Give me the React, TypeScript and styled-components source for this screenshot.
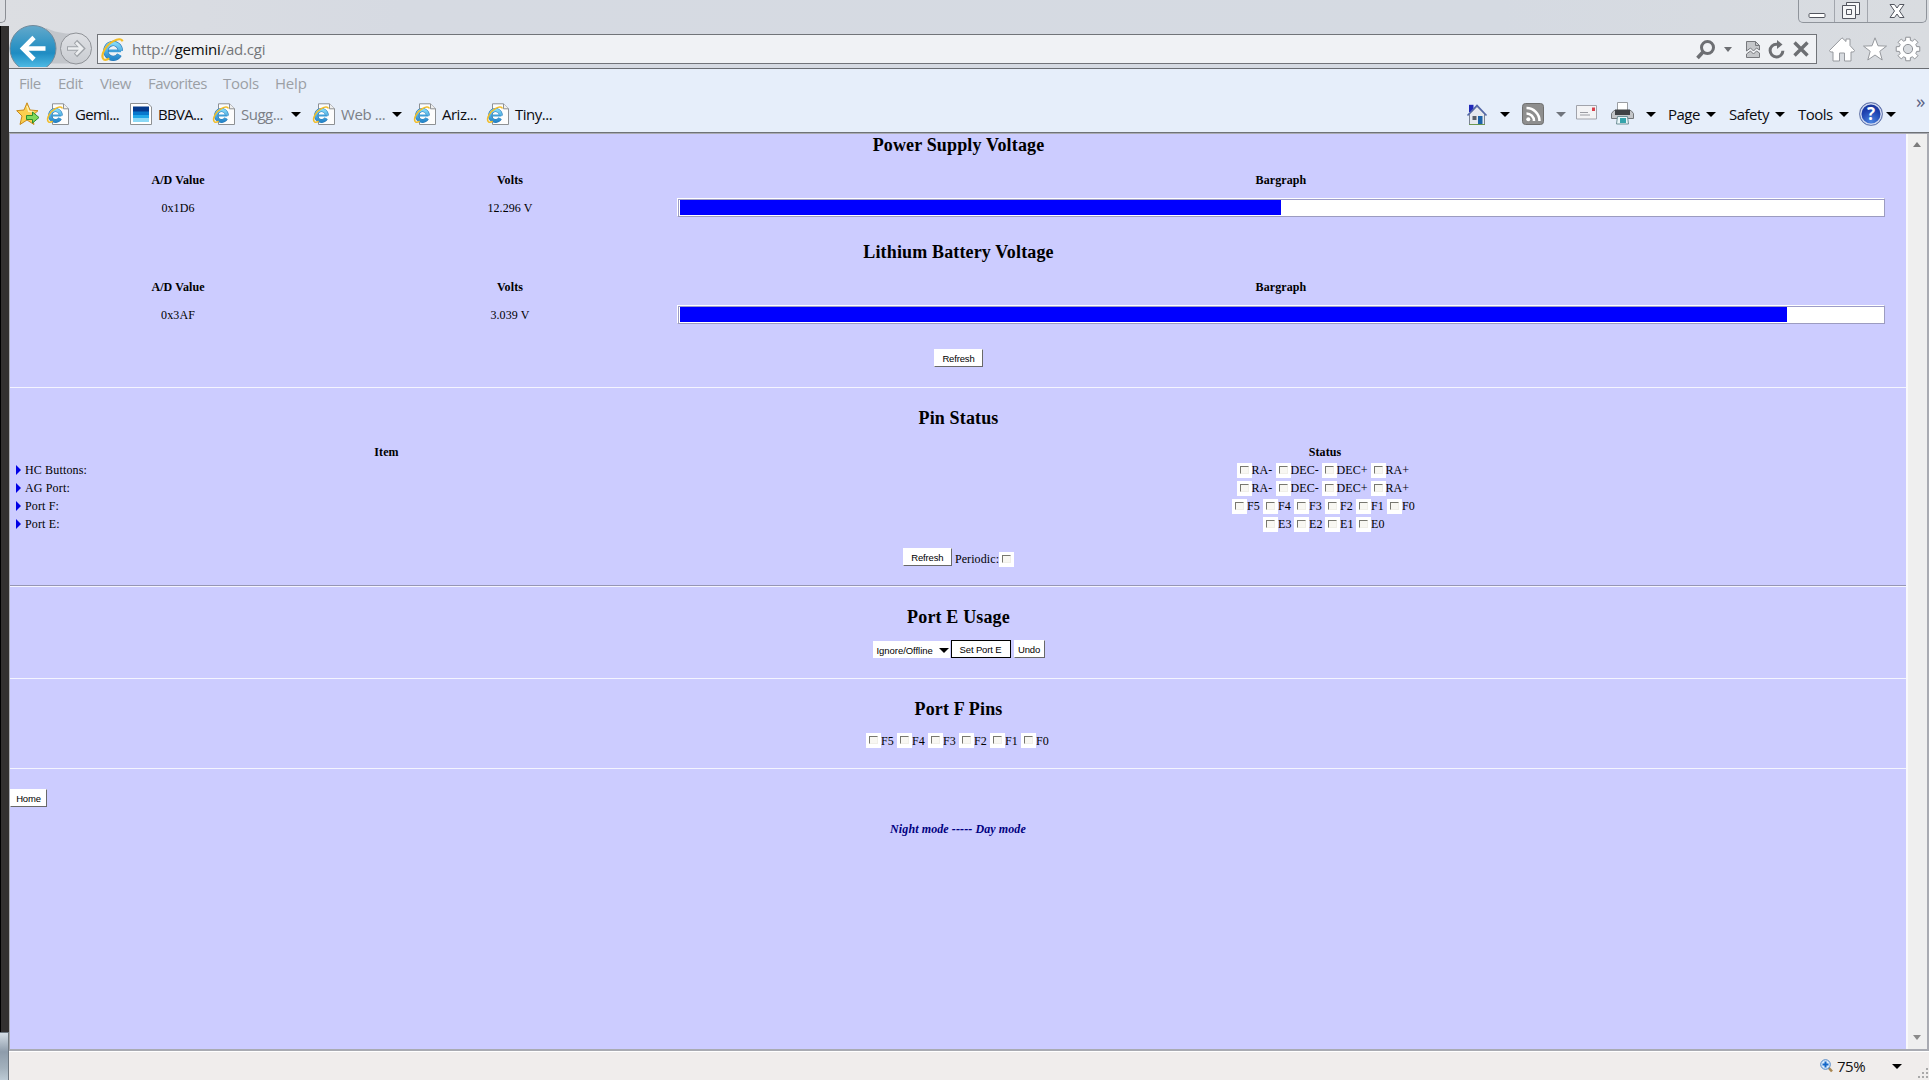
import React, { useId } from "react";
import styled, { createGlobalStyle, css } from "styled-components";

const GlobalStyle = createGlobalStyle`
  *, *::before, *::after { box-sizing: border-box; }
  html, body { margin: 0; padding: 0; overflow: hidden; background: #d9dce2; }
  svg { display: block; flex: none; overflow: visible; }
`;

const ui = '"Open Sans", "Noto Sans", sans-serif';
const serif = '"Liberation Serif", "Times New Roman", serif';
const sans = '"Liberation Sans", Arial, sans-serif';

/* ---------- window frame ---------- */

const Desktop = styled.div`
  width: 1929px;
  height: 1080px;
  display: flex;
  overflow: hidden;
  background: linear-gradient(90deg, #dcdee2 0, #d6dae2 400px, #d5dae2 1500px, #d9dce0 100%);
`;

const LeftEdge = styled.div`
  flex: none;
  width: 9px;
  display: flex;
  flex-direction: column;
`;

const TabStub = styled.div`
  width: 6px;
  height: 23px;
  margin-bottom: 3px;
  border: solid #8b8e94;
  border-width: 0 1px 1px 0;
  border-radius: 0 0 5px 0;
`;

const DarkStrip = styled.div`
  height: 1006px;
  border-left: 1px solid #000;
  background: #333130;
`;

const TaskPiece = styled.div`
  flex: 1;
  border: solid #6e7780;
  border-width: 1px 1px 0 0;
  background: linear-gradient(#d5dee6, #8e9cab 40%, #a3b1bd 75%, #bccad5);
`;

const Window = styled.div`
  flex: 1;
  min-width: 0;
  display: flex;
  flex-direction: column;
`;

const TitleBar = styled.div`
  height: 34px;
  display: flex;
  justify-content: flex-end;
  padding-right: 2px;
`;

const WindowButtons = styled.div`
  height: 23px;
  display: flex;
  border: 1px solid #8f949b;
  border-top: 0;
  border-radius: 0 0 5px 5px;
`;

const WindowButton = styled.div<{ $w: number }>`
  width: ${(p) => p.$w}px;
  display: flex;
  justify-content: center;
  align-items: flex-start;
  & + & { border-left: 1px solid #a2a6ad; }
`;

const AddressRow = styled.div`
  height: 34px;
  display: flex;
  align-items: flex-start;
`;

const NavButtons = styled.div`
  width: 88px;
  height: 34px;
  flex: none;
`;

const AddressBox = styled.div`
  width: 1720px;
  height: 30px;
  flex: none;
  display: flex;
  align-items: center;
  padding-left: 3px;
  border: 1px solid #717479;
  background: #f0f2f5;
  font: 15px/28px ${ui};
  color: #75777a;
`;

const Url = styled.span`
  width: 1564px;
  margin-left: 8px;
  letter-spacing: -0.2px;
  white-space: nowrap;
  b { font-weight: 400; color: #0a0a0a; }
`;

const Slot = styled.span<{ $w: number; $gap?: number; $dim?: boolean; $ls?: number }>`
  flex: none;
  width: ${(p) => p.$w}px;
  margin-left: ${(p) => p.$gap ?? 0}px;
  white-space: nowrap;
  letter-spacing: ${(p) => p.$ls ?? -0.5}px;
  ${(p) => p.$dim && css`color: #7b7f86;`}
`;

const CommandArea = styled.div`
  height: 65px;
  border-top: 1px solid #6a6d72;
  border-bottom: 1px solid #6f7277;
  background: #e6eefa;
  display: flex;
  flex-direction: column;
  font: 15px/20px ${ui};
  color: #0c0c10;
`;

const MenuRow = styled.div`
  height: 27px;
  display: flex;
  align-items: center;
  color: #9b9fa5;
`;

const LinksRow = styled.div`
  height: 36px;
  display: flex;
  align-items: center;
  & > span, & > div > span { padding-bottom: 1px; }
`;

const RightTools = styled.div`
  display: flex;
  align-items: center;
  margin-left: auto;
  padding-right: 3px;
`;

const More = styled.span`
  width: 10px;
  height: 40px;
  margin-left: 20px;
  font: 19px/15px ${ui};
  letter-spacing: -1px;
  color: #5b6384;
`;

const Triangle = styled.i<{ $gap?: number; $color?: string; $w?: number }>`
  flex: none;
  width: 0;
  height: 0;
  margin-left: ${(p) => p.$gap ?? 0}px;
  border: solid transparent;
  border-width: 5px ${(p) => (p.$w ?? 10) / 2}px 0;
  border-top-color: ${(p) => p.$color ?? "#000"};
`;

/* ---------- page ---------- */

const Viewport = styled.div`
  height: 918px;
  display: flex;
  border: solid #a9abb2;
  border-width: 1px 2px 2px 1px;
`;

const Page = styled.main`
  width: 1896px;
  flex: none;
  background: #ccccff;
  display: flex;
  flex-direction: column;
  font: 12px/18px ${serif};
  letter-spacing: 0.1px;
  color: #000;
`;

const ScrollBar = styled.div`
  flex: 1;
  display: flex;
  flex-direction: column;
  align-items: center;
  justify-content: space-between;
  padding: 8px 2px 9px 0;
  background: #efefef;
  border-left: 2px solid #f9f9fb;
`;

const Arrow = styled.i<{ $up?: boolean }>`
  border: solid transparent;
  ${(p) => p.$up
    ? css`border-width: 0 4.5px 5px; border-bottom-color: #7c7c7c;`
    : css`border-width: 5px 4.5px 0; border-top-color: #8a8a8a;`}
`;

const Heading = styled.h2<{ $top: number }>`
  margin: ${(p) => p.$top}px 0 0;
  padding-left: 1px;
  height: 22px;
  font: bold 18px/22px ${serif};
  letter-spacing: 0.15px;
  text-align: center;
`;

const VoltageGrid = styled.div`
  display: grid;
  grid-template-columns: 334px 330px 1212px;
  grid-template-rows: 18px 20px;
  row-gap: 8px;
  margin: 15px 0 0 1px;
  text-align: center;
  align-items: center;
`;

const Th = styled.div`
  font-weight: bold;
`;

const Reading = styled.div`
  padding-top: 1px;
`;

const Bar = styled.div`
  width: 1208px;
  height: 19px;
  margin-left: 2px;
  padding: 1px 2px;
  border: solid;
  border-width: 1px;
  border-color: #fff #9c9cc0 #9c9cc0 #fff;
  background: #fff;
  display: flex;
  box-shadow: inset 1px 1px 0 #9c9cc8;
`;

const Fill = styled.div<{ $pct: number }>`
  width: ${(p) => p.$pct}%;
  height: 15px;
  background: #0000ff;
`;

const FormRow = styled.div<{ $top: number; $h: number; $left?: boolean }>`
  margin-top: ${(p) => p.$top}px;
  height: ${(p) => p.$h}px;
  display: flex;
  align-items: center;
  justify-content: ${(p) => (p.$left ? "flex-start" : "center")};
  padding-left: ${(p) => (p.$left ? 0 : 1)}px;
`;

const Button = styled.button<{ $w: number; $default?: boolean }>`
  width: ${(p) => p.$w}px;
  height: 18px;
  padding: 1px 0 0;
  border: solid;
  border-width: 1px;
  border-color: ${(p) => (p.$default ? "#000" : "#fff #696969 #696969 #fff")};
  background: #fff;
  font: 9.5px/15px ${sans};
  letter-spacing: -0.15px;
  color: #000;
  white-space: nowrap;
`;

const Select = styled.div`
  width: 77px;
  height: 17px;
  margin-top: 1px;
  padding: 1px 1px 0 4px;
  display: flex;
  align-items: center;
  justify-content: space-between;
  background: #fff;
  font: 9.5px/15px ${sans};
  letter-spacing: -0.05px;
`;

const Rule = styled.hr<{ $top: number; $shaded?: boolean }>`
  width: 1896px;
  height: ${(p) => (p.$shaded ? 2 : 1)}px;
  margin: ${(p) => p.$top}px 0 0;
  border: 0;
  ${(p) => p.$shaded && css`border-top: 1px solid #9696b4;`}
  background: #f4f4ff;
`;

const PinTable = styled.div`
  display: grid;
  grid-template-columns: 751px 1126px;
  grid-template-rows: 18px repeat(4, 18px);
  margin: 14px 0 0 1px;
  text-align: center;
`;

const ItemName = styled.div`
  display: flex;
  align-items: center;
  gap: 4px;
  padding-left: 5px;
  line-height: 18px;
  letter-spacing: 0.15px;
`;

const Caret = styled.i`
  border: solid transparent;
  border-width: 5px 0 5px 5px;
  border-left-color: #0000e6;
`;

const Pins = styled.div`
  display: flex;
  justify-content: center;
  align-items: center;
`;

const Pin = styled.label<{ $w: number }>`
  width: ${(p) => p.$w}px;
  display: flex;
  align-items: center;
  white-space: nowrap;
`;

const Box = styled.span`
  display: block;
  flex: none;
  width: 15px;
  height: 15px;
  padding: 3px;
  background: #fff;
  &::before {
    content: "";
    display: block;
    width: 9px;
    height: 8px;
    border: solid;
    border-width: 1px;
    border-color: #77776f #f0efe8 #f0efe8 #77776f;
    background: #f8f7f2;
  }
`;

const Mode = styled.div`
  margin-top: 13px;
  font: italic bold 12px/18px ${serif};
  text-align: center;
  color: #000080;
`;

const StatusBar = styled.footer`
  flex: 1;
  display: flex;
  align-items: center;
  justify-content: flex-end;
  border-top: 1px solid #fff;
  background: #f0edec;
  font: 15px/20px ${ui};
  color: #111;
  & > svg, & > span:not(:last-child) { margin-bottom: 1px; }
`;

/* ---------- icons ---------- */

const IeMark = ({ size }: { size: number }) => {
  const id = useId();
  return (
    <svg width={size} height={size} viewBox="0 0 22 22" fill="none">
      <linearGradient id={id} x1="0" y1="0" x2="0" y2="1">
        <stop offset="0" stopColor="#7fd6f7" />
        <stop offset="1" stopColor="#2788cb" />
      </linearGradient>
      <path d="M5 12.3h14.2" stroke="#3f9fd8" strokeWidth="2.6" />
      <path d="M18.6 12.3A7 7.1 0 1 0 17.6 16" stroke="#2878b8" strokeWidth="5" />
      <path d="M18.6 12.3A7 7.1 0 1 0 17.6 16" stroke={`url(#${id})`} strokeWidth="3.8" />
      <path d="M2.5 20.4C-1 16.5 4.5 6.8 12 3c3.8-2 7.6-2.7 8.6.2M2.5 20.4c1.3 1 3.5.4 5.5-.9" stroke="#f2bd27" strokeWidth="2" />
    </svg>
  );
};

const IePage = () => (
  <svg width="22" height="22" viewBox="0 0 22 22">
    <path d="M5.5.8h11l5 5v15.700h-16z" fill="#fdfdfd" stroke="#8d9093" />
    <path d="M16.500.8v5h5" fill="#efefef" stroke="#8d9093" />
    <g transform="translate(-.5 3)"><IeMark size={17} /></g>
  </svg>
);

const BankPage = () => (
  <svg width="22" height="22" viewBox="0 0 22 22">
    <path d="M.5.500h17.500l3.500 3.500v17.500H.5z" fill="#fff" stroke="#8d9093" />
    <path d="M3 3.500h16V9H3z" fill="#063a8c" />
    <path d="M3 8.500h16v4H3z" fill="#0878cd" />
    <path d="M3 12h16v3.500H3z" fill="#22a8e8" />
    <path d="M3 15h16v4H3z" fill="#8ad8f5" />
  </svg>
);

const FavStar = () => (
  <svg width="24" height="24" viewBox="0 0 24 24">
    <path d="m11 .8 3 7.200 8 .7-6 5.300 2 8.500-7-4.500-7 4.500 2-8.500L.7 8.700l7.300-.7z" fill="#fbd04f" stroke="#c98a1c" strokeLinejoin="round" />
    <path d="m11 4 1.800 5.300 4.700.4" fill="none" stroke="#fff0ae" strokeWidth="1.500" />
    <path d="M10.500 13.500h6v-3.500l6.500 5.500-6.500 5.500v-3.500h-6z" fill="#7ed85b" stroke="#2d8d2c" />
  </svg>
);

const NavArrows = () => (
  <svg width="88" height="33" viewBox="9 34 88 33">
    <defs>
      <linearGradient id="back" x1="0" y1="0" x2="0" y2="1">
        <stop offset="0" stopColor="#64a9cb" />
        <stop offset=".45" stopColor="#2e93c4" />
        <stop offset=".6" stopColor="#1f8cc2" />
        <stop offset="1" stopColor="#5cc8ee" />
      </linearGradient>
      <linearGradient id="fwd" x1="0" y1="0" x2="0" y2="1">
        <stop offset="0" stopColor="#dfe1e5" />
        <stop offset="1" stopColor="#c9ccd1" />
      </linearGradient>
      <clipPath id="navclip"><path d="M0 0h100v67H0z" /></clipPath>
    </defs>
    <g clipPath="url(#navclip)">
      <path d="M46 28q8 4 20 5.500h10v30H46z" fill="#c3c6cb" />
      <circle cx="33" cy="48.500" r="23" fill="url(#back)" stroke="#71899a" />
      <circle cx="76" cy="48.500" r="15.500" fill="url(#fwd)" stroke="#8f9297" />
      <path d="M45.500 48.500H23.500M34 37.500l-11 11 11 11" fill="none" stroke="#fff" strokeWidth="4.600" />
      <path d="M67 48.500h15M75.500 41.500l7 7-7 7" fill="none" stroke="#9fa3a8" strokeWidth="4.600" />
      <path d="M68 48.500h14M76 42.500l6 6-6 6" fill="none" stroke="#eceef0" strokeWidth="2.600" />
    </g>
  </svg>
);

const Minimize = () => (
  <svg width="18" height="20"><rect x="1" y="13.500" width="16" height="4" rx="1" fill="#fff" stroke="#53565f" /></svg>
);
const Restore = () => (
  <svg width="20" height="20" fill="#f6f7f8" stroke="#53565f">
    <path d="M5.500 2.500h13v12h-13z" />
    <path d="M1.500 5.500h13v13h-13z" />
    <path d="M5.500 9.500h5v5h-5z" />
  </svg>
);
const Close = () => (
  <svg width="16" height="20"><path d="M1 4.500h4.500L8 8l2.500-3.500H15L10.500 11l4.500 6.500h-4.500L8 14l-2.500 3.500H1L5.500 11z" fill="#fff" stroke="#53565f" strokeLinejoin="round" /></svg>
);

const Search = () => (
  <svg width="19" height="19" fill="none" stroke="#6d6f73">
    <circle cx="11.500" cy="7.500" r="6" strokeWidth="3" />
    <path d="m7 12-5.500 6" strokeWidth="3.600" />
  </svg>
);
const BrokenPage = () => (
  <svg width="14" height="17" fill="#c5c7ca" stroke="#77797d">
    <path d="M.5.500h9l4 4V9l-3-2-3 3-3-3-4 3z" />
    <path d="m.5 13 4-3 3 3 3-3 3 2v4.500H.5z" />
    <path d="M9.500.500v4h4" fill="none" />
  </svg>
);
const Refresh = () => (
  <svg width="17" height="19" fill="none" stroke="#6d6f73">
    <path d="M10 4.200H8.500a6.400 6.400 0 1 0 6.400 6.600" strokeWidth="3" />
    <path d="m9 0 5.500 4.500L9 9z" fill="#6d6f73" stroke="none" />
  </svg>
);
const Stop = () => (
  <svg width="16" height="16"><path d="m1.500 1.500 13 13m0-13-13 13" stroke="#6d6f73" strokeWidth="3.400" /></svg>
);

const Home = () => (
  <svg width="26" height="25"><path d="M13 .8 17 4.500V2h4v6.500l4.500 5-1 1.500H22v9h-6.500v-8h-5v8H4v-9H1.500l-1-1.500z" fill="#fff" stroke="#96999e" /></svg>
);
const Star = () => (
  <svg width="24" height="24"><path d="m12 .8 3 8 8.500.3-6.700 5.200 2.400 8.700L12 18l-7.200 5 2.400-8.700L.5 9.100 9 8.800z" fill="#fff" stroke="#96999e" /></svg>
);
const gearPath = (() => {
  const pts: string[] = [];
  for (let i = 0; i < 8; i++) {
    [[-0.27, 9], [-0.19, 12], [0.19, 12], [0.27, 9]].forEach(([da, r]) => {
      const a = (i * Math.PI) / 4 + da;
      pts.push(`${(12 + r * Math.cos(a)).toFixed(2)} ${(12 + r * Math.sin(a)).toFixed(2)}`);
    });
  }
  return `M${pts.join("L")}z`;
})();
const Gear = () => (
  <svg width="24" height="24" stroke="#8f9297">
    <path d={gearPath} fill="#fff" strokeLinejoin="round" />
    <circle cx="12" cy="12" r="4.600" fill="#d8dbdf" />
  </svg>
);

const House = () => (
  <svg width="20" height="21" viewBox="0 0 20 21">
    <path d="M2 .8h4.500V8H2z" fill="#2028b8" />
    <path d="M2.500 10 10 2.500l7.500 7.500v10.500h-15z" fill="#e6e9ef" stroke="#7b8493" />
    <path d="M.5 11.500 10 1.500l9.500 10" fill="none" stroke="#5468a8" strokeWidth="1.600" />
    <path d="M11 12h4.500v8.500H11z" fill="#1d63a8" />
    <path d="M5.500 12h4v4h-4z" fill="#5b6068" />
    <path d="M2 20.500h16" stroke="#6c9850" />
  </svg>
);
const Rss = () => (
  <svg width="22" height="22" fill="none" stroke="#fff">
    <rect x=".5" y=".5" width="21" height="21" rx="3" fill="#8e8e8e" stroke="#6f6f6f" />
    <path d="M4.500 10.500a7.500 7.500 0 0 1 7.500 7.500M4.500 5A13 13 0 0 1 17.500 18" strokeWidth="2.600" />
    <circle cx="6.300" cy="16.200" r="2" fill="#fff" stroke="none" />
  </svg>
);
const Mail = () => (
  <svg width="21" height="15">
    <path d="M.5.500h20v13.500H.5z" fill="#f3f3f5" stroke="#a1a3ab" />
    <path d="M16 2.500h3v3.500h-3z" fill="#d8414d" />
    <path d="M4 7.500h8M4 10h10" stroke="#9b9ca2" />
  </svg>
);
const MailSlot = styled.span`
  flex: none;
  margin-left: 10px;
  margin-bottom: 3px;
`;
const Printer = () => (
  <svg width="23" height="23">
    <path d="M6.500.500h10V9h-10z" fill="#fff" stroke="#9b9ea2" />
    <path d="M.5 11.500 3 8.500h17l2.500 3v5H.5z" fill="#c3c5c8" stroke="#73767a" />
    <path d="M4 7.500h15v5.500H4z" fill="#3f4245" />
    <path d="M6.500 14.500h10l1 7.500h-12z" fill="#eaf7fa" stroke="#6f8f96" />
    <path d="M9 16h6v5H9z" fill="#35a4ac" />
  </svg>
);
const HelpGlyph = styled.span`
  flex: none;
  width: 24px;
  height: 24px;
  margin-left: 10px;
  border: 1px solid #6f7fae;
  border-radius: 50%;
  box-shadow: inset 0 0 0 1.5px #cfd8ef;
  background: radial-gradient(circle at 50% 85%, #4a83e0, #1c3fae 55%, #16308f);
  font: bold 17px/22px ${ui};
  text-align: center;
  color: #fff;
`;
const Zoomer = () => (
  <svg width="13" height="14">
    <path d="m8 8 4 4.500" stroke="#a98752" strokeWidth="2.600" />
    <circle cx="5.500" cy="5.500" r="4.800" fill="#d8eafb" stroke="#4f86c6" />
    <path d="M5.500 2.500v6M2.500 5.500h6" stroke="#1467c8" strokeWidth="2" />
  </svg>
);
const Grip = () => (
  <svg width="11" height="11" fill="#a9a9a9">
    <path d="M8 0h2v2H8zM4 4h2v2H4zM8 4h2v2H8zM0 8h2v2H0zM4 8h2v2H4zM8 8h2v2H8z" />
  </svg>
);
const Gap = styled.span<{ $w: number; $drop?: number }>`
  flex: none;
  display: block;
  padding-left: ${(p) => p.$w}px;
  padding-top: ${(p) => p.$drop ?? 0}px;
`;

/* ---------- composition ---------- */

const Voltage = ({ adc, volts, pct }: { adc: string; volts: string; pct: number }) => (
  <VoltageGrid>
    <Th>A/D Value</Th><Th>Volts</Th><Th>Bargraph</Th>
    <Reading>{adc}</Reading><Reading>{volts}</Reading>
    <Bar><Fill $pct={pct} /></Bar>
  </VoltageGrid>
);

const buttonPins: [string, number][] = [["RA-", 39], ["DEC-", 46], ["DEC+", 49], ["RA+", 43]];
const portF: [string, number][] = ["F5", "F4", "F3", "F2", "F1", "F0"].map((n) => [n, 31]);
const portE: [string, number][] = ["E3", "E2", "E1", "E0"].map((n) => [n, 31]);

const PinList = ({ pins }: { pins: [string, number][] }) => (
  <Pins>{pins.map(([name, w]) => <Pin key={name} $w={w}><Box />{name}</Pin>)}</Pins>
);

const statusRows: [string, [string, number][]][] = [
  ["HC Buttons:", buttonPins],
  ["AG Port:", buttonPins],
  ["Port F:", portF],
  ["Port E:", portE],
];

export default function App() {
  return (
    <Desktop>
      <GlobalStyle />
      <LeftEdge><TabStub /><DarkStrip /><TaskPiece /></LeftEdge>
      <Window>
        <TitleBar>
          <WindowButtons>
            <WindowButton $w={35}><Minimize /></WindowButton>
            <WindowButton $w={33}><Restore /></WindowButton>
            <WindowButton $w={59}><Close /></WindowButton>
          </WindowButtons>
        </TitleBar>
        <AddressRow>
          <NavButtons><NavArrows /></NavButtons>
          <AddressBox>
            <IeMark size={23} />
            <Url>http://<b>gemini</b>/ad.cgi</Url>
            <Search />
            <Triangle $gap={9} $w={9} $color="#6d6f73" />
            <Gap $w={14}><BrokenPage /></Gap>
            <Gap $w={8}><Refresh /></Gap>
            <Gap $w={8}><Stop /></Gap>
          </AddressBox>
          <Gap $w={12} $drop={3}><Home /></Gap>
          <Gap $w={8} $drop={3}><Star /></Gap>
          <Gap $w={9} $drop={3}><Gear /></Gap>
        </AddressRow>
        <CommandArea>
          <MenuRow>
            <Slot $w={39} $gap={10}>File</Slot>
            <Slot $w={42}>Edit</Slot>
            <Slot $w={48}>View</Slot>
            <Slot $w={75}>Favorites</Slot>
            <Slot $w={52} $ls={-0.3}>Tools</Slot>
            <Slot $w={40} $ls={-0.2}>Help</Slot>
          </MenuRow>
          <LinksRow>
            <Gap $w={7}><FavStar /></Gap>
            <Gap $w={7}><IePage /></Gap>
            <Slot $w={49} $gap={6} $ls={-0.7}>Gemi...</Slot>
            <Gap $w={6}><BankPage /></Gap>
            <Slot $w={50} $gap={6} $ls={-0.7}>BBVA...</Slot>
            <Gap $w={5}><IePage /></Gap>
            <Slot $w={44} $gap={6} $dim>Sugg...</Slot>
            <Triangle $gap={6} />
            <Gap $w={12}><IePage /></Gap>
            <Slot $w={44} $gap={6} $dim $ls={-0.4}>Web ...</Slot>
            <Triangle $gap={7} />
            <Gap $w={12}><IePage /></Gap>
            <Slot $w={38} $gap={6}>Ariz...</Slot>
            <Gap $w={7}><IePage /></Gap>
            <Slot $w={44} $gap={6}>Tiny...</Slot>
            <RightTools>
              <House />
              <Triangle $gap={13} />
              <Gap $w={12}><Rss /></Gap>
              <Triangle $gap={12} $color="#70747c" />
              <MailSlot><Mail /></MailSlot>
              <Gap $w={14}><Printer /></Gap>
              <Triangle $gap={12} />
              <Slot $w={33} $gap={12}>Page</Slot>
              <Triangle $gap={5} />
              <Slot $w={40} $gap={13}>Safety</Slot>
              <Triangle $gap={6} />
              <Slot $w={36} $gap={13}>Tools</Slot>
              <Triangle $gap={5} />
              <HelpGlyph>?</HelpGlyph>
              <Triangle $gap={3} />
              <More>»</More>
            </RightTools>
          </LinksRow>
        </CommandArea>
        <Viewport>
          <Page>
            <Heading $top={0}>Power Supply Voltage</Heading>
            <Voltage adc="0x1D6" volts="12.296 V" pct={50} />
            <Heading $top={24}>Lithium Battery Voltage</Heading>
            <Voltage adc="0x3AF" volts="3.039 V" pct={92.1} />
            <FormRow $top={25} $h={18}><Button $w={49}>Refresh</Button></FormRow>
            <Rule $top={20} />
            <Heading $top={19}>Pin Status</Heading>
            <PinTable>
              <Th>Item</Th><Th>Status</Th>
              {statusRows.map(([name, pins]) => (
                <React.Fragment key={name}>
                  <ItemName><Caret />{name}</ItemName>
                  <PinList pins={pins} />
                </React.Fragment>
              ))}
            </PinTable>
            <FormRow $top={15} $h={18}>
              <Button $w={49}>Refresh</Button>
              <Gap $w={3} $drop={3}>Periodic:</Gap>
              <Gap $w={0} $drop={4}><Box /></Gap>
            </FormRow>
            <Rule $top={19} $shaded />
            <Heading $top={19}>Port E Usage</Heading>
            <FormRow $top={12} $h={18}>
              <Select>Ignore/Offline<Triangle /></Select>
              <Gap $w={1}><Button $w={60} $default>Set Port E</Button></Gap>
              <Gap $w={3}><Button $w={31}>Undo</Button></Gap>
            </FormRow>
            <Rule $top={20} />
            <Heading $top={19}>Port F Pins</Heading>
            <FormRow $top={13} $h={15}><Gap $w={1}><PinList pins={portF} /></Gap></FormRow>
            <Rule $top={20} />
            <FormRow $top={20} $h={18} $left><Button $w={37}>Home</Button></FormRow>
            <Mode>Night mode ----- Day mode</Mode>
          </Page>
          <ScrollBar><Arrow $up /><Arrow /></ScrollBar>
        </Viewport>
        <StatusBar>
          <Zoomer />
          <Slot $w={28} $gap={4}>75%</Slot>
          <Triangle $gap={27} />
          <Gap $w={16} $drop={14}><Grip /></Gap>
        </StatusBar>
      </Window>
    </Desktop>
  );
}
